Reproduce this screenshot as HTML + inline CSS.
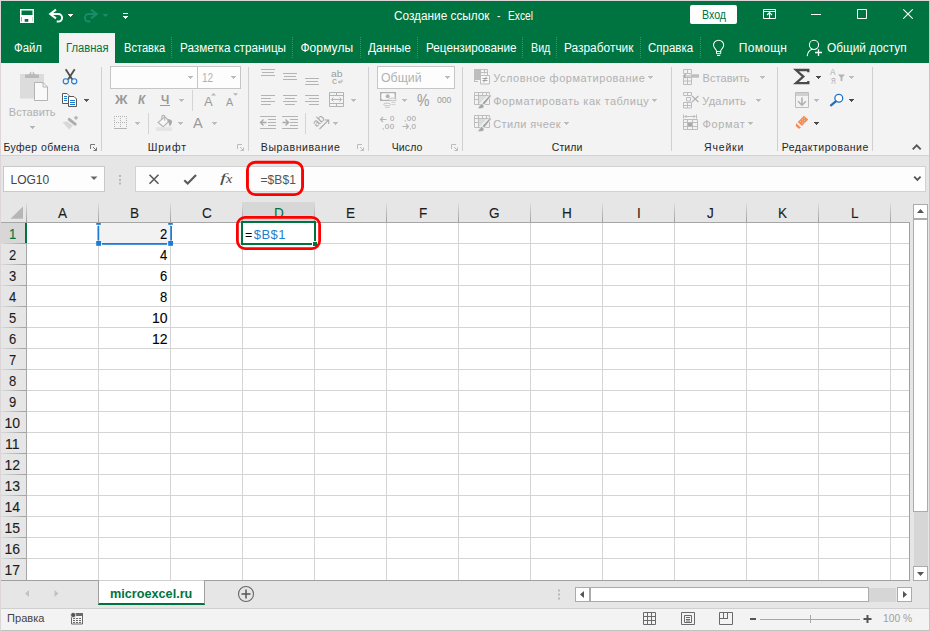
<!DOCTYPE html>
<html><head><meta charset="utf-8"><title>Excel</title>
<style>
html,body{margin:0;padding:0;}
body{width:930px;height:631px;overflow:hidden;position:relative;background:#e6e6e6;font-family:"Liberation Sans",sans-serif;}
.b{position:absolute;box-sizing:border-box;}
.t{position:absolute;white-space:pre;transform-origin:0 0;font-family:"Liberation Sans",sans-serif;}
svg{position:absolute;overflow:visible;}
</style></head><body>
<div class="b" style="left:0px;top:0px;width:930px;height:631px;background:#e6e6e6;"></div>
<div class="b" style="left:1px;top:1px;width:928px;height:62px;background:#007440;"></div>
<div class="b" style="left:59px;top:33px;width:56px;height:30px;background:#f3f3f3;"></div>
<div class="b" style="left:1px;top:63px;width:928px;height:92px;background:#f3f3f3;"></div>
<div class="b" style="left:1px;top:155px;width:928px;height:1px;background:#d2d2d2;"></div>
<div class="b" style="left:101px;top:67px;width:1px;height:84px;background:#d0d0d0;"></div>
<div class="b" style="left:248px;top:67px;width:1px;height:84px;background:#d0d0d0;"></div>
<div class="b" style="left:368px;top:67px;width:1px;height:84px;background:#d0d0d0;"></div>
<div class="b" style="left:462px;top:67px;width:1px;height:84px;background:#d0d0d0;"></div>
<div class="b" style="left:671px;top:67px;width:1px;height:84px;background:#d0d0d0;"></div>
<div class="b" style="left:777px;top:67px;width:1px;height:84px;background:#d0d0d0;"></div>
<div class="b" style="left:872px;top:67px;width:1px;height:84px;background:#d0d0d0;"></div>
<div class="b" style="left:3px;top:166px;width:102px;height:26px;background:#fdfdfd;border:1px solid #c9c9c9;"></div>
<div class="b" style="left:135px;top:166px;width:111px;height:26px;background:#fdfdfd;border:1px solid #d2d2d2;border-right:1px solid #e0e0e0;"></div>
<div class="b" style="left:245px;top:166px;width:681px;height:26px;background:#fdfdfd;border:1px solid #d2d2d2;border-left:none;"></div>
<div class="b" style="left:1px;top:201px;width:909px;height:21px;background:#e6e6e6;"></div>
<div class="b" style="left:1px;top:222px;width:909px;height:1px;background:#a6a6a6;"></div>
<div class="b" style="left:26px;top:223px;width:883px;height:357px;background:#fff;"></div>
<div class="b" style="left:242px;top:202px;width:73px;height:20px;background:#d7d7d7;"></div>
<div class="b" style="left:1px;top:223px;width:25px;height:20px;background:#d7d7d7;"></div>
<div class="b" style="left:99px;top:223px;width:71px;height:20px;background:#f2f2f2;"></div>
<div class="b" style="left:26px;top:203px;width:1px;height:19px;background:linear-gradient(to bottom,#dcdcdc,#a0a0a0);"></div>
<div class="b" style="left:98px;top:203px;width:1px;height:19px;background:linear-gradient(to bottom,#dcdcdc,#a0a0a0);"></div>
<div class="b" style="left:170px;top:203px;width:1px;height:19px;background:linear-gradient(to bottom,#dcdcdc,#a0a0a0);"></div>
<div class="b" style="left:242px;top:203px;width:1px;height:19px;background:linear-gradient(to bottom,#dcdcdc,#a0a0a0);"></div>
<div class="b" style="left:314px;top:203px;width:1px;height:19px;background:linear-gradient(to bottom,#dcdcdc,#a0a0a0);"></div>
<div class="b" style="left:386px;top:203px;width:1px;height:19px;background:linear-gradient(to bottom,#dcdcdc,#a0a0a0);"></div>
<div class="b" style="left:458px;top:203px;width:1px;height:19px;background:linear-gradient(to bottom,#dcdcdc,#a0a0a0);"></div>
<div class="b" style="left:530px;top:203px;width:1px;height:19px;background:linear-gradient(to bottom,#dcdcdc,#a0a0a0);"></div>
<div class="b" style="left:602px;top:203px;width:1px;height:19px;background:linear-gradient(to bottom,#dcdcdc,#a0a0a0);"></div>
<div class="b" style="left:674px;top:203px;width:1px;height:19px;background:linear-gradient(to bottom,#dcdcdc,#a0a0a0);"></div>
<div class="b" style="left:746px;top:203px;width:1px;height:19px;background:linear-gradient(to bottom,#dcdcdc,#a0a0a0);"></div>
<div class="b" style="left:818px;top:203px;width:1px;height:19px;background:linear-gradient(to bottom,#dcdcdc,#a0a0a0);"></div>
<div class="b" style="left:890px;top:203px;width:1px;height:19px;background:linear-gradient(to bottom,#dcdcdc,#a0a0a0);"></div>
<div class="b" style="left:98px;top:223px;width:1px;height:357px;background:#d4d4d4;"></div>
<div class="b" style="left:170px;top:223px;width:1px;height:357px;background:#d4d4d4;"></div>
<div class="b" style="left:242px;top:223px;width:1px;height:357px;background:#d4d4d4;"></div>
<div class="b" style="left:314px;top:223px;width:1px;height:357px;background:#d4d4d4;"></div>
<div class="b" style="left:386px;top:223px;width:1px;height:357px;background:#d4d4d4;"></div>
<div class="b" style="left:458px;top:223px;width:1px;height:357px;background:#d4d4d4;"></div>
<div class="b" style="left:530px;top:223px;width:1px;height:357px;background:#d4d4d4;"></div>
<div class="b" style="left:602px;top:223px;width:1px;height:357px;background:#d4d4d4;"></div>
<div class="b" style="left:674px;top:223px;width:1px;height:357px;background:#d4d4d4;"></div>
<div class="b" style="left:746px;top:223px;width:1px;height:357px;background:#d4d4d4;"></div>
<div class="b" style="left:818px;top:223px;width:1px;height:357px;background:#d4d4d4;"></div>
<div class="b" style="left:890px;top:223px;width:1px;height:357px;background:#d4d4d4;"></div>
<div class="b" style="left:26px;top:223px;width:1px;height:357px;background:#a6a6a6;"></div>
<div class="b" style="left:27px;top:243px;width:882px;height:1px;background:#d4d4d4;"></div>
<div class="b" style="left:1px;top:243px;width:25px;height:1px;background:linear-gradient(to right,#dadada,#a0a0a0);"></div>
<div class="b" style="left:27px;top:264px;width:882px;height:1px;background:#d4d4d4;"></div>
<div class="b" style="left:1px;top:264px;width:25px;height:1px;background:linear-gradient(to right,#dadada,#a0a0a0);"></div>
<div class="b" style="left:27px;top:285px;width:882px;height:1px;background:#d4d4d4;"></div>
<div class="b" style="left:1px;top:285px;width:25px;height:1px;background:linear-gradient(to right,#dadada,#a0a0a0);"></div>
<div class="b" style="left:27px;top:306px;width:882px;height:1px;background:#d4d4d4;"></div>
<div class="b" style="left:1px;top:306px;width:25px;height:1px;background:linear-gradient(to right,#dadada,#a0a0a0);"></div>
<div class="b" style="left:27px;top:327px;width:882px;height:1px;background:#d4d4d4;"></div>
<div class="b" style="left:1px;top:327px;width:25px;height:1px;background:linear-gradient(to right,#dadada,#a0a0a0);"></div>
<div class="b" style="left:27px;top:348px;width:882px;height:1px;background:#d4d4d4;"></div>
<div class="b" style="left:1px;top:348px;width:25px;height:1px;background:linear-gradient(to right,#dadada,#a0a0a0);"></div>
<div class="b" style="left:27px;top:369px;width:882px;height:1px;background:#d4d4d4;"></div>
<div class="b" style="left:1px;top:369px;width:25px;height:1px;background:linear-gradient(to right,#dadada,#a0a0a0);"></div>
<div class="b" style="left:27px;top:390px;width:882px;height:1px;background:#d4d4d4;"></div>
<div class="b" style="left:1px;top:390px;width:25px;height:1px;background:linear-gradient(to right,#dadada,#a0a0a0);"></div>
<div class="b" style="left:27px;top:411px;width:882px;height:1px;background:#d4d4d4;"></div>
<div class="b" style="left:1px;top:411px;width:25px;height:1px;background:linear-gradient(to right,#dadada,#a0a0a0);"></div>
<div class="b" style="left:27px;top:432px;width:882px;height:1px;background:#d4d4d4;"></div>
<div class="b" style="left:1px;top:432px;width:25px;height:1px;background:linear-gradient(to right,#dadada,#a0a0a0);"></div>
<div class="b" style="left:27px;top:453px;width:882px;height:1px;background:#d4d4d4;"></div>
<div class="b" style="left:1px;top:453px;width:25px;height:1px;background:linear-gradient(to right,#dadada,#a0a0a0);"></div>
<div class="b" style="left:27px;top:474px;width:882px;height:1px;background:#d4d4d4;"></div>
<div class="b" style="left:1px;top:474px;width:25px;height:1px;background:linear-gradient(to right,#dadada,#a0a0a0);"></div>
<div class="b" style="left:27px;top:495px;width:882px;height:1px;background:#d4d4d4;"></div>
<div class="b" style="left:1px;top:495px;width:25px;height:1px;background:linear-gradient(to right,#dadada,#a0a0a0);"></div>
<div class="b" style="left:27px;top:516px;width:882px;height:1px;background:#d4d4d4;"></div>
<div class="b" style="left:1px;top:516px;width:25px;height:1px;background:linear-gradient(to right,#dadada,#a0a0a0);"></div>
<div class="b" style="left:27px;top:537px;width:882px;height:1px;background:#d4d4d4;"></div>
<div class="b" style="left:1px;top:537px;width:25px;height:1px;background:linear-gradient(to right,#dadada,#a0a0a0);"></div>
<div class="b" style="left:27px;top:558px;width:882px;height:1px;background:#d4d4d4;"></div>
<div class="b" style="left:1px;top:558px;width:25px;height:1px;background:linear-gradient(to right,#dadada,#a0a0a0);"></div>
<div class="b" style="left:909px;top:222px;width:1px;height:359px;background:#a0a0a0;"></div>
<div class="b" style="left:1px;top:580px;width:909px;height:1px;background:#a0a0a0;"></div>
<div class="b" style="left:99px;top:580px;width:105px;height:1px;background:#d0d0d0;"></div>
<div class="b" style="left:25px;top:223px;width:2px;height:20px;background:#007440;"></div>
<div class="b" style="left:1px;top:608px;width:928px;height:1px;background:#cfcfcf;"></div>
<div class="b" style="left:1px;top:609px;width:928px;height:21px;background:#f3f3f3;"></div>
<div class="b" style="left:0px;top:630px;width:930px;height:1px;background:#c2c2c2;"></div>
<div class="b" style="left:929px;top:0px;width:1px;height:631px;background:#c6c6c6;"></div>
<div class="b" style="left:0px;top:0px;width:1px;height:631px;background:#dcd6d8;"></div>
<div class="b" style="left:0px;top:0px;width:930px;height:1px;background:#dcd6d8;"></div>
<div class="b" style="left:98px;top:581px;width:107px;height:24px;background:#fff;border-bottom:2px solid #007440;border-left:1px solid #a0a0a0;border-right:1px solid #a0a0a0;"></div>
<span class="t" style="left:394.40px;top:8.00px;font-size:12px;line-height:16px;color:#fff;transform:scaleX(0.9830);">Создание ссылок</span>
<span class="t" style="left:497.00px;top:8.00px;font-size:12px;line-height:16px;color:#fff;transform:scaleX(0.8500);">-</span>
<span class="t" style="left:507.60px;top:8.00px;font-size:12px;line-height:16px;color:#fff;transform:scaleX(0.8511);">Excel</span>
<div class="b" style="left:690px;top:5px;width:47px;height:19px;background:#fff;border-radius:2px;"></div>
<span class="t" style="left:702.00px;top:7.00px;font-size:12px;line-height:16px;color:#007440;transform:scaleX(0.8848);">Вход</span>
<span class="t" style="left:13.60px;top:40.00px;font-size:12px;line-height:16px;color:#fff;transform:scaleX(0.9492);">Файл</span>
<span class="t" style="left:66.00px;top:40.00px;font-size:12px;line-height:16px;color:#007440;transform:scaleX(0.9337);">Главная</span>
<span class="t" style="left:123.60px;top:40.00px;font-size:12px;line-height:16px;color:#fff;transform:scaleX(0.9232);">Вставка</span>
<span class="t" style="left:179.60px;top:40.00px;font-size:12px;line-height:16px;color:#fff;transform:scaleX(0.9736);">Разметка страницы</span>
<span class="t" style="left:300.40px;top:40.00px;font-size:12px;line-height:16px;color:#fff;letter-spacing:0.092px;">Формулы</span>
<span class="t" style="left:368.00px;top:40.00px;font-size:12px;line-height:16px;color:#fff;transform:scaleX(0.9914);">Данные</span>
<span class="t" style="left:425.60px;top:40.00px;font-size:12px;line-height:16px;color:#fff;transform:scaleX(0.9760);">Рецензирование</span>
<span class="t" style="left:531.00px;top:40.00px;font-size:12px;line-height:16px;color:#fff;transform:scaleX(0.8920);">Вид</span>
<span class="t" style="left:564.40px;top:40.00px;font-size:12px;line-height:16px;color:#fff;transform:scaleX(0.9925);">Разработчик</span>
<span class="t" style="left:648.40px;top:40.00px;font-size:12px;line-height:16px;color:#fff;transform:scaleX(0.9592);">Справка</span>
<span class="t" style="left:738.80px;top:40.00px;font-size:12px;line-height:16px;color:#fff;letter-spacing:0.290px;">Помощн</span>
<span class="t" style="left:826.90px;top:40.00px;font-size:12px;line-height:16px;color:#fff;transform:scaleX(0.9873);">Общий доступ</span>
<div class="b" style="left:171px;top:37px;width:1px;height:21px;background:repeating-linear-gradient(to bottom,#2f987c 0 1px,transparent 1px 2px);"></div>
<div class="b" style="left:292px;top:37px;width:1px;height:21px;background:repeating-linear-gradient(to bottom,#2f987c 0 1px,transparent 1px 2px);"></div>
<div class="b" style="left:360px;top:37px;width:1px;height:21px;background:repeating-linear-gradient(to bottom,#2f987c 0 1px,transparent 1px 2px);"></div>
<div class="b" style="left:417px;top:37px;width:1px;height:21px;background:repeating-linear-gradient(to bottom,#2f987c 0 1px,transparent 1px 2px);"></div>
<div class="b" style="left:522px;top:37px;width:1px;height:21px;background:repeating-linear-gradient(to bottom,#2f987c 0 1px,transparent 1px 2px);"></div>
<div class="b" style="left:556px;top:37px;width:1px;height:21px;background:repeating-linear-gradient(to bottom,#2f987c 0 1px,transparent 1px 2px);"></div>
<div class="b" style="left:640px;top:37px;width:1px;height:21px;background:repeating-linear-gradient(to bottom,#2f987c 0 1px,transparent 1px 2px);"></div>
<div class="b" style="left:700px;top:37px;width:1px;height:21px;background:repeating-linear-gradient(to bottom,#2f987c 0 1px,transparent 1px 2px);"></div>
<span class="t" style="left:3.40px;top:140.00px;font-size:10.5px;line-height:14px;color:#262626;letter-spacing:0.420px;">Буфер обмена</span>
<span class="t" style="left:147.80px;top:140.00px;font-size:10.5px;line-height:14px;color:#262626;letter-spacing:0.925px;">Шрифт</span>
<span class="t" style="left:260.80px;top:140.00px;font-size:10.5px;line-height:14px;color:#262626;letter-spacing:0.605px;">Выравнивание</span>
<span class="t" style="left:391.70px;top:140.00px;font-size:10.5px;line-height:14px;color:#262626;letter-spacing:0.138px;">Число</span>
<span class="t" style="left:551.70px;top:140.00px;font-size:10.5px;line-height:14px;color:#262626;letter-spacing:0.112px;">Стили</span>
<span class="t" style="left:704.00px;top:140.00px;font-size:10.5px;line-height:14px;color:#262626;letter-spacing:0.830px;">Ячейки</span>
<span class="t" style="left:781.70px;top:140.00px;font-size:10.5px;line-height:14px;color:#262626;letter-spacing:0.508px;">Редактирование</span>
<span class="t" style="left:8.80px;top:105.00px;font-size:11px;line-height:14px;color:#b1b1b1;letter-spacing:0.025px;">Вставить</span>
<span class="t" style="left:493.20px;top:71.00px;font-size:11px;line-height:14px;color:#b1b1b1;letter-spacing:0.533px;">Условное форматирование</span>
<span class="t" style="left:493.20px;top:94.00px;font-size:11px;line-height:14px;color:#b1b1b1;letter-spacing:0.520px;">Форматировать как таблицу</span>
<span class="t" style="left:493.20px;top:117.00px;font-size:11px;line-height:14px;color:#b1b1b1;letter-spacing:0.380px;">Стили ячеек</span>
<span class="t" style="left:702.60px;top:71.00px;font-size:11px;line-height:14px;color:#b1b1b1;letter-spacing:0.054px;">Вставить</span>
<span class="t" style="left:702.30px;top:94.00px;font-size:11px;line-height:14px;color:#b1b1b1;letter-spacing:0.250px;">Удалить</span>
<span class="t" style="left:702.60px;top:117.00px;font-size:11px;line-height:14px;color:#b1b1b1;letter-spacing:0.615px;">Формат</span>
<div class="b" style="left:110px;top:66px;width:88px;height:23px;background:#fdfdfd;border:1px solid #c6c6c6;"></div>
<div class="b" style="left:197px;top:66px;width:44px;height:23px;background:#fdfdfd;border:1px solid #c6c6c6;"></div>
<span class="t" style="left:202.00px;top:69.00px;font-size:13px;line-height:17px;color:#b1b1b1;transform:scaleX(0.7724);">12</span>
<div class="b" style="left:377px;top:66px;width:78px;height:23px;background:#fdfdfd;border:1px solid #c6c6c6;"></div>
<span class="t" style="left:380.60px;top:69.00px;font-size:13px;line-height:17px;color:#b1b1b1;transform:scaleX(0.9497);">Общий</span>
<span class="t" style="left:114.84px;top:92.00px;font-size:12px;line-height:16px;color:#9a9a9a;transform:scaleX(1.1506);font-weight:bold;">Ж</span>
<span class="t" style="left:138.00px;top:92.00px;font-size:12px;line-height:16px;color:#9a9a9a;transform:scaleX(0.9846);font-weight:bold;font-style:italic;">К</span>
<span class="t" style="left:160.80px;top:92.00px;font-size:12px;line-height:16px;color:#9a9a9a;transform:scaleX(0.9791);font-weight:bold;">Ч</span>
<div class="b" style="left:160px;top:105px;width:10px;height:1px;background:#9a9a9a;"></div>
<span class="t" style="left:203.70px;top:93.00px;font-size:13px;line-height:17px;color:#9a9a9a;transform:scaleX(1.0057);">A</span>
<span class="t" style="left:226.00px;top:96.00px;font-size:10px;line-height:13px;color:#9a9a9a;transform:scaleX(1.0815);">A</span>
<span class="t" style="left:193.30px;top:113.00px;font-size:15px;line-height:19px;color:#9a9a9a;transform:scaleX(0.9700);">A</span>
<span class="t" style="left:416.50px;top:91.00px;font-size:16px;line-height:19px;color:#9a9a9a;transform:scaleX(0.8772);">%</span>
<span class="t" style="left:437.00px;top:93.00px;font-size:9.5px;line-height:13px;color:#9a9a9a;transform:scaleX(0.9071);">000</span>
<span class="t" style="left:10.50px;top:172.00px;font-size:12px;line-height:16px;color:#444;">LOG10</span>
<span class="t" style="left:260.50px;top:172.00px;font-size:12px;line-height:16px;color:#555;letter-spacing:0.075px;">=$B$1</span>
<span class="t" style="left:58.15px;top:204.00px;font-size:14px;line-height:18px;color:#1c1c1c;transform:scaleX(0.9700);-webkit-text-stroke:0.1px currentColor;">A</span>
<span class="t" style="left:130.15px;top:204.00px;font-size:14px;line-height:18px;color:#1c1c1c;transform:scaleX(0.9700);-webkit-text-stroke:0.1px currentColor;">B</span>
<span class="t" style="left:201.79px;top:204.00px;font-size:14px;line-height:18px;color:#1c1c1c;transform:scaleX(0.9700);-webkit-text-stroke:0.1px currentColor;">C</span>
<span class="t" style="left:273.79px;top:204.00px;font-size:14px;line-height:18px;color:#007440;transform:scaleX(0.9700);-webkit-text-stroke:0.1px currentColor;">D</span>
<span class="t" style="left:346.15px;top:204.00px;font-size:14px;line-height:18px;color:#1c1c1c;transform:scaleX(0.9700);-webkit-text-stroke:0.1px currentColor;">E</span>
<span class="t" style="left:418.58px;top:204.00px;font-size:14px;line-height:18px;color:#1c1c1c;transform:scaleX(0.9700);-webkit-text-stroke:0.1px currentColor;">F</span>
<span class="t" style="left:489.43px;top:204.00px;font-size:14px;line-height:18px;color:#1c1c1c;transform:scaleX(0.9700);-webkit-text-stroke:0.1px currentColor;">G</span>
<span class="t" style="left:561.79px;top:204.00px;font-size:14px;line-height:18px;color:#1c1c1c;transform:scaleX(0.9700);-webkit-text-stroke:0.1px currentColor;">H</span>
<span class="t" style="left:636.82px;top:204.00px;font-size:14px;line-height:18px;color:#1c1c1c;transform:scaleX(0.9700);-webkit-text-stroke:0.1px currentColor;">I</span>
<span class="t" style="left:707.31px;top:204.00px;font-size:14px;line-height:18px;color:#1c1c1c;transform:scaleX(0.9700);-webkit-text-stroke:0.1px currentColor;">J</span>
<span class="t" style="left:778.15px;top:204.00px;font-size:14px;line-height:18px;color:#1c1c1c;transform:scaleX(0.9700);-webkit-text-stroke:0.1px currentColor;">K</span>
<span class="t" style="left:850.94px;top:204.00px;font-size:14px;line-height:18px;color:#1c1c1c;transform:scaleX(0.9700);-webkit-text-stroke:0.1px currentColor;">L</span>
<span class="t" style="left:8.70px;top:225.00px;font-size:14px;line-height:18px;color:#007440;transform:scaleX(0.9300);-webkit-text-stroke:0.1px currentColor;">1</span>
<span class="t" style="left:8.70px;top:246.00px;font-size:14px;line-height:18px;color:#1c1c1c;transform:scaleX(0.9300);-webkit-text-stroke:0.1px currentColor;">2</span>
<span class="t" style="left:8.70px;top:267.00px;font-size:14px;line-height:18px;color:#1c1c1c;transform:scaleX(0.9300);-webkit-text-stroke:0.1px currentColor;">3</span>
<span class="t" style="left:8.70px;top:288.00px;font-size:14px;line-height:18px;color:#1c1c1c;transform:scaleX(0.9300);-webkit-text-stroke:0.1px currentColor;">4</span>
<span class="t" style="left:8.70px;top:309.00px;font-size:14px;line-height:18px;color:#1c1c1c;transform:scaleX(0.9300);-webkit-text-stroke:0.1px currentColor;">5</span>
<span class="t" style="left:8.70px;top:330.00px;font-size:14px;line-height:18px;color:#1c1c1c;transform:scaleX(0.9300);-webkit-text-stroke:0.1px currentColor;">6</span>
<span class="t" style="left:8.70px;top:351.00px;font-size:14px;line-height:18px;color:#1c1c1c;transform:scaleX(0.9300);-webkit-text-stroke:0.1px currentColor;">7</span>
<span class="t" style="left:8.70px;top:372.00px;font-size:14px;line-height:18px;color:#1c1c1c;transform:scaleX(0.9300);-webkit-text-stroke:0.1px currentColor;">8</span>
<span class="t" style="left:8.70px;top:393.00px;font-size:14px;line-height:18px;color:#1c1c1c;transform:scaleX(0.9300);-webkit-text-stroke:0.1px currentColor;">9</span>
<span class="t" style="left:4.49px;top:414.00px;font-size:14px;line-height:18px;color:#1c1c1c;-webkit-text-stroke:0.1px currentColor;">10</span>
<span class="t" style="left:5.05px;top:435.00px;font-size:14px;line-height:18px;color:#1c1c1c;-webkit-text-stroke:0.1px currentColor;">11</span>
<span class="t" style="left:4.49px;top:456.00px;font-size:14px;line-height:18px;color:#1c1c1c;-webkit-text-stroke:0.1px currentColor;">12</span>
<span class="t" style="left:4.49px;top:477.00px;font-size:14px;line-height:18px;color:#1c1c1c;-webkit-text-stroke:0.1px currentColor;">13</span>
<span class="t" style="left:4.49px;top:498.00px;font-size:14px;line-height:18px;color:#1c1c1c;-webkit-text-stroke:0.1px currentColor;">14</span>
<span class="t" style="left:4.49px;top:519.00px;font-size:14px;line-height:18px;color:#1c1c1c;-webkit-text-stroke:0.1px currentColor;">15</span>
<span class="t" style="left:4.49px;top:540.00px;font-size:14px;line-height:18px;color:#1c1c1c;-webkit-text-stroke:0.1px currentColor;">16</span>
<span class="t" style="left:4.49px;top:561.00px;font-size:14px;line-height:18px;color:#1c1c1c;-webkit-text-stroke:0.1px currentColor;">17</span>
<span class="t" style="left:160.29px;top:225.00px;font-size:14px;line-height:18px;color:#000;transform:scaleX(0.9300);-webkit-text-stroke:0.1px currentColor;">2</span>
<span class="t" style="left:160.29px;top:246.00px;font-size:14px;line-height:18px;color:#000;transform:scaleX(0.9300);-webkit-text-stroke:0.1px currentColor;">4</span>
<span class="t" style="left:160.29px;top:267.00px;font-size:14px;line-height:18px;color:#000;transform:scaleX(0.9300);-webkit-text-stroke:0.1px currentColor;">6</span>
<span class="t" style="left:160.29px;top:288.00px;font-size:14px;line-height:18px;color:#000;transform:scaleX(0.9300);-webkit-text-stroke:0.1px currentColor;">8</span>
<span class="t" style="left:151.88px;top:309.00px;font-size:14px;line-height:18px;color:#000;-webkit-text-stroke:0.1px currentColor;">10</span>
<span class="t" style="left:151.88px;top:330.00px;font-size:14px;line-height:18px;color:#000;-webkit-text-stroke:0.1px currentColor;">12</span>
<span class="t" style="left:245.20px;top:226.00px;font-size:13px;line-height:17px;color:#000;transform:scaleX(0.9574);">=</span>
<span class="t" style="left:253.80px;top:226.00px;font-size:13px;line-height:17px;color:#1e80d2;letter-spacing:0.442px;">$B$1</span>
<span class="t" style="left:110.30px;top:585.00px;font-size:13px;line-height:17px;color:#007440;transform:scaleX(0.9740);font-weight:bold;">microexcel.ru</span>
<span class="t" style="left:6.70px;top:611.00px;font-size:11.5px;line-height:14px;color:#444;transform:scaleX(0.9641);">Правка</span>
<span class="t" style="left:882.60px;top:611.00px;font-size:11px;line-height:14px;color:#a0a0a0;transform:scaleX(0.9344);">100 %</span>
<span class="t" style="left:331.00px;top:68.00px;font-size:9px;line-height:12px;color:#9e9e9e;transform:scaleX(1.1500);">ab</span>
<span class="t" style="left:331.50px;top:75.00px;font-size:9px;line-height:12px;color:#9e9e9e;transform:scaleX(1.1111);">c</span>
<span class="t" style="left:390.00px;top:113.00px;font-size:8px;line-height:11px;color:#9e9e9e;transform:scaleX(0.9556);">0</span>
<span class="t" style="left:382.00px;top:121.00px;font-size:8px;line-height:11px;color:#9e9e9e;letter-spacing:0.588px;">,00</span>
<span class="t" style="left:404.00px;top:113.00px;font-size:8px;line-height:11px;color:#9e9e9e;letter-spacing:0.438px;">,00</span>
<span class="t" style="left:409.30px;top:121.00px;font-size:8px;line-height:11px;color:#9e9e9e;letter-spacing:0.075px;">,0</span>
<span class="t" style="left:830.20px;top:66.00px;font-size:9px;line-height:12px;color:#adadad;transform:scaleX(0.9167);">A</span>
<span class="t" style="left:830.80px;top:75.00px;font-size:9px;line-height:12px;color:#adadad;transform:scaleX(0.7077);">Я</span>
<span class="t" style="left:317.5px;top:118px;font-size:11px;line-height:11px;color:#a3a3a3;transform:rotate(-45deg);transform-origin:0 100%;">ab</span>
<span class="t" style="left:220.20px;top:169.00px;font-size:13px;line-height:17px;color:#4a4a4a;transform:scaleX(1.7171);font-style:italic;font-family:'Liberation Serif',serif;">f</span>
<span class="t" style="left:225.71px;top:172.00px;font-size:11.5px;line-height:14px;color:#4a4a4a;transform:scaleX(1.2279);font-style:italic;font-family:'Liberation Serif',serif;">x</span>
<svg width="930" height="631" viewBox="0 0 930 631" style="left:0;top:0"><path d="M20.75 9.75h12.5v12.5h-12.5z" stroke="#fff" stroke-width="1.5" fill="none" /><rect x="20" y="15" width="14" height="2" fill="#fff" /><rect x="22" y="17" width="10.5" height="6" fill="#fff" /><rect x="24.7" y="19" width="3.6" height="2.8" fill="#007440" /><path d="M56 9.600L50.200 14l5.800 4.400M50.600 14H58.300a3.800 3.800 0 0 1 0 7.600h-1.600" stroke="#fff" stroke-width="2" fill="none" /><path d="M68 14h5v1h-1v1h-1v1h-1v-1h-1v-1h-1z" fill="#fff"/><path d="M91 9.600L96.800 14l-5.800 4.400M96.400 14H88.700a3.800 3.800 0 0 0 0 7.600h1.600" stroke="#1a8c6a" stroke-width="2" fill="none" /><path d="M103 14h5v1h-1v1h-1v1h-1v-1h-1v-1h-1z" fill="#1a8c6a"/><rect x="123" y="13" width="5" height="1" fill="#fff" /><path d="M123 16h5v1h-1v1h-1v1h-1v-1h-1v-1h-1z" fill="#fff"/><path d="M763.500 9.500h12v9h-12zM763.500 11.500h12" stroke="#fff" stroke-width="1" fill="none" /><path d="M769.500 18.500v-5.500M767 15l2.500-2.500 2.500 2.500" stroke="#fff" stroke-width="1.1" fill="none" /><rect x="811" y="14" width="10" height="1" fill="#fff" /><path d="M857.5 9.5h9v9h-9z" stroke="#fff" stroke-width="1" fill="none" /><path d="M903.3 9.3l9.4 9.4M912.7 9.3l-9.4 9.4" stroke="#fff" stroke-width="1.1" fill="none" /><path d="M716.500 51.500v-.5c0-1.700-3-3-3-5.700a5.100 5.100 0 0 1 10.200 0c0 2.700-3 4-3 5.700v.5z" stroke="#fff" stroke-width="1.05" fill="none" /><path d="M716.500 51.500h4.200v2.200h-4.200z" stroke="#fff" stroke-width="1" fill="none" /><rect x="717" y="55" width="3.2" height="1" fill="#fff" /><circle cx="814" cy="44.800" r="4.600" fill="none" stroke="#fff" stroke-width="1.050"/><path d="M812.300 49.300c-3 .8-4.700 3.300-5.100 6.800" stroke="#fff" stroke-width="1.05" fill="none" /><path d="M818.500 49.300v6.800M815 52.500h7" stroke="#fff" stroke-width="1.3" fill="none" /><rect x="20" y="74" width="24" height="24.5" fill="#dcdcdc" /><path d="M25 78v-3.6h4.4a2.6 2.6 0 0 1 5.2 0H39V78z"  fill="#b9b9b9" /><rect x="31" y="72.4" width="2" height="1.6" fill="#f1f1f1" /><path d="M34.5 82.5h8.5l4.5 4.5v13.5h-13z" stroke="#b4b4b4" stroke-width="1" fill="#f9f9f9" /><path d="M43 82.5v4.5h4.5" stroke="#b4b4b4" stroke-width="1" fill="none" /><path d="M30 126h5v1h-1v1h-1v1h-1v-1h-1v-1h-1z" fill="#b5b5b5"/><path d="M65.700 69.300l6.600 10.200M74.700 69.300l-6.600 10.200" stroke="#4f4f4f" stroke-width="1.8" fill="none" /><circle cx="65.800" cy="81.300" r="2.600" stroke="#1e7bd4" stroke-width="1.100" fill="none"/><circle cx="74.200" cy="81.300" r="2.600" stroke="#1e7bd4" stroke-width="1.100" fill="none"/><path d="M62.5 93.5h4.5l2 2v8h-6.5z" stroke="#595959" stroke-width="1" fill="#fff" /><rect x="64" y="96" width="3" height="1" fill="#1e7bd4" /><rect x="64" y="98" width="3" height="1" fill="#1e7bd4" /><rect x="64" y="100" width="3" height="1" fill="#1e7bd4" /><path d="M68.5 96.5h5.5l2.5 2.5v7.5h-8z" stroke="#595959" stroke-width="1" fill="#fff" /><rect x="70" y="100" width="5" height="1" fill="#1e7bd4" /><rect x="70" y="102" width="5" height="1" fill="#1e7bd4" /><rect x="70" y="104" width="5" height="1" fill="#1e7bd4" /><path d="M84 99h5v1h-1v1h-1v1h-1v-1h-1v-1h-1z" fill="#595959"/><path d="M76 115.700l2.200 2.100-2.200 2.200-2.200-2.200z"  fill="#b4b4b4" /><path d="M69.200 119.400l6 4.700" stroke="#adadad" stroke-width="3" fill="none" stroke-linecap="round"/><path d="M67.300 121.300l5.600 4.400-3.800 3.900-6.600-7.300z"  fill="#d8d8d8" /><path d="M188 76h5v1h-1v1h-1v1h-1v-1h-1v-1h-1z" fill="#bcbcbc"/><path d="M231 76h5v1h-1v1h-1v1h-1v-1h-1v-1h-1z" fill="#bcbcbc"/><path d="M179 99h5v1h-1v1h-1v1h-1v-1h-1v-1h-1z" fill="#bcbcbc"/><rect x="192" y="90" width="1" height="21" fill="#d4d4d4" /><path d="M211 95.5l2.5-2.5 2.5 2.5z"  fill="#b4b4b4" /><path d="M233 93.3h5l-2.5 2.5z"  fill="#b4b4b4" /><line x1="114" y1="116.5" x2="127" y2="116.5" stroke="#b4b4b4" stroke-width="1" stroke-dasharray="1 1"/><line x1="114" y1="122.5" x2="127" y2="122.5" stroke="#b4b4b4" stroke-width="1" stroke-dasharray="1 1"/><line x1="114.5" y1="116" x2="114.5" y2="128" stroke="#b4b4b4" stroke-width="1" stroke-dasharray="1 1"/><line x1="120.5" y1="116" x2="120.5" y2="128" stroke="#b4b4b4" stroke-width="1" stroke-dasharray="1 1"/><line x1="126.5" y1="116" x2="126.5" y2="128" stroke="#b4b4b4" stroke-width="1" stroke-dasharray="1 1"/><rect x="114" y="128" width="13" height="1" fill="#b4b4b4" /><path d="M135 122h5v1h-1v1h-1v1h-1v-1h-1v-1h-1z" fill="#bcbcbc"/><rect x="148" y="113" width="1" height="21" fill="#d4d4d4" /><path d="M158.200 122.400l6.600-5.700 4.300 4.200-5.900 5.900z" stroke="#b4b4b4" stroke-width="1.2" fill="#f8f8f8" /><path d="M161.800 119.600v-2.700a1.500 1.500 0 0 1 3 0v3.800" stroke="#b4b4b4" stroke-width="1.1" fill="none" /><path d="M167.300 119l2.200 .3c1.600 .5 2.500 1.400 2.600 2.400-.2 1.800-1.200 3.300-2.600 4.800-.200-2.200-.6-4-2.100-5.500z"  fill="#a9a9a9" /><rect x="156" y="127.2" width="16" height="3.7" fill="#e4e4e4" /><path d="M178 122h5v1h-1v1h-1v1h-1v-1h-1v-1h-1z" fill="#bcbcbc"/><path d="M212 122h5v1h-1v1h-1v1h-1v-1h-1v-1h-1z" fill="#bcbcbc"/><rect x="261" y="69" width="14" height="1" fill="#b4b4b4" /><rect x="262" y="72" width="12" height="1" fill="#b4b4b4" /><rect x="261" y="75" width="14" height="1" fill="#b4b4b4" /><rect x="283" y="73" width="14" height="1" fill="#b4b4b4" /><rect x="284" y="76" width="12" height="1" fill="#b4b4b4" /><rect x="283" y="79" width="14" height="1" fill="#b4b4b4" /><rect x="305" y="78" width="14" height="1" fill="#b4b4b4" /><rect x="306" y="81" width="12" height="1" fill="#b4b4b4" /><rect x="305" y="84" width="14" height="1" fill="#b4b4b4" /><rect x="261" y="95" width="14" height="1" fill="#b4b4b4" /><rect x="283" y="95" width="14" height="1" fill="#b4b4b4" /><rect x="305" y="95" width="14" height="1" fill="#b4b4b4" /><rect x="261" y="98" width="10" height="1" fill="#b4b4b4" /><rect x="285" y="98" width="10" height="1" fill="#b4b4b4" /><rect x="309" y="98" width="10" height="1" fill="#b4b4b4" /><rect x="261" y="101" width="14" height="1" fill="#b4b4b4" /><rect x="283" y="101" width="14" height="1" fill="#b4b4b4" /><rect x="305" y="101" width="14" height="1" fill="#b4b4b4" /><rect x="261" y="104" width="10" height="1" fill="#b4b4b4" /><rect x="285" y="104" width="10" height="1" fill="#b4b4b4" /><rect x="309" y="104" width="10" height="1" fill="#b4b4b4" /><path d="M329.5 92.5h14v14h-14zM329.5 95.5h14M329.5 103.5h14M336.5 92.5v3M336.5 103.5v3" stroke="#b4b4b4" stroke-width="1" fill="none" /><path d="M331.5 99.500h10M333.500 97.500l-2 2 2 2M339.500 97.500l2 2-2 2" stroke="#b4b4b4" stroke-width="1" fill="none" /><path d="M351 99h5v1h-1v1h-1v1h-1v-1h-1v-1h-1z" fill="#bcbcbc"/><rect x="260" y="116" width="16" height="1" fill="#b4b4b4" /><rect x="260" y="128" width="16" height="1" fill="#b4b4b4" /><rect x="268" y="119" width="8" height="1" fill="#b4b4b4" /><rect x="268" y="122" width="8" height="1" fill="#b4b4b4" /><rect x="268" y="125" width="8" height="1" fill="#b4b4b4" /><path d="M260.500 122.500h6M263.500 119.500l-3 3 3 3" stroke="#a8a8a8" stroke-width="1.4" fill="none" /><rect x="282" y="116" width="16" height="1" fill="#b4b4b4" /><rect x="282" y="128" width="16" height="1" fill="#b4b4b4" /><rect x="290" y="119" width="8" height="1" fill="#b4b4b4" /><rect x="290" y="122" width="8" height="1" fill="#b4b4b4" /><rect x="290" y="125" width="8" height="1" fill="#b4b4b4" /><path d="M282.500 122.500h6M285.500 119.500l3 3-3 3" stroke="#a8a8a8" stroke-width="1.4" fill="none" /><rect x="305" y="113" width="1" height="21" fill="#d4d4d4" /><path d="M319.500 129l9-8.800M324.800 120h3.900v3.900" stroke="#a8a8a8" stroke-width="1.1" fill="none" /><path d="M333 122h5v1h-1v1h-1v1h-1v-1h-1v-1h-1z" fill="#bcbcbc"/><path d="M90.5 149v-4.500h4.500" stroke="#777" stroke-width="1" fill="none" /><path d="M93 147l3.500 3.500M96.5 147.5v3h-3" stroke="#777" stroke-width="1" fill="none" /><path d="M237.5 149v-4.500h4.500" stroke="#bcbcbc" stroke-width="1" fill="none" /><path d="M240 147l3.500 3.500M243.5 147.5v3h-3" stroke="#bcbcbc" stroke-width="1" fill="none" /><path d="M357.5 149v-4.500h4.500" stroke="#bcbcbc" stroke-width="1" fill="none" /><path d="M360 147l3.500 3.500M363.5 147.5v3h-3" stroke="#bcbcbc" stroke-width="1" fill="none" /><path d="M451.5 149v-4.500h4.500" stroke="#bcbcbc" stroke-width="1" fill="none" /><path d="M454 147l3.500 3.500M457.5 147.5v3h-3" stroke="#bcbcbc" stroke-width="1" fill="none" /><path d="M445 76h5v1h-1v1h-1v1h-1v-1h-1v-1h-1z" fill="#bcbcbc"/><path d="M380.700 92.700h14.600v7.600h-14.600z" stroke="#b2b2b2" stroke-width="1.3" fill="#f9f9f9" /><path d="M380.100 92.100h3l-3 3zM395.900 92.100h-3l3 3zM380.100 100.800h3l-3-3z"  fill="#b2b2b2" /><circle cx="387.700" cy="96.200" r="2" fill="#b2b2b2"/><ellipse cx="392.500" cy="99.400" rx="3.600" ry="1.400" fill="#f3f3f3" stroke="#c0c0c0" stroke-width=".9"/><rect x="391.5" y="102" width="4" height="0.8" fill="#cacaca" /><rect x="391.5" y="104.2" width="4" height="0.8" fill="#cacaca" /><ellipse cx="387.200" cy="104.500" rx="3.400" ry="1.400" fill="#f3f3f3" stroke="#c0c0c0" stroke-width=".9"/><rect x="385" y="107.1" width="5" height="0.8" fill="#cacaca" /><path d="M402 99h5v1h-1v1h-1v1h-1v-1h-1v-1h-1z" fill="#bcbcbc"/><path d="M380.500 119.500h6M383 117l-2.500 2.500 2.500 2.500" stroke="#b4b4b4" stroke-width="1.1" fill="none" /><path d="M402.500 126.500h6M406 124l2.500 2.500-2.500 2.500" stroke="#b4b4b4" stroke-width="1.1" fill="none" /><rect x="474" y="69" width="6" height="3" fill="#bdbdbd" /><rect x="474" y="73" width="6" height="3" fill="#bdbdbd" /><rect x="474" y="77" width="6" height="3" fill="#bdbdbd" /><rect x="474" y="81" width="4" height="1" fill="#bdbdbd" /><path d="M474.500 69.500h13v6M480.500 69.500v6M484.500 69.500v4M474.500 72.500h13M474.500 76.500h6M474.500 69.500v12" stroke="#bdbdbd" stroke-width="1" fill="none" /><path d="M480.500 75.500h9v8.500h-9z" stroke="#bdbdbd" stroke-width="1" fill="#f8f8f8" /><path d="M482.500 78.500h5M482.500 80.500h5M486.300 76.800l-2.600 5.600" stroke="#999" stroke-width="0.9" fill="none" /><path d="M474.500 92.5h15v12h-15zM474.500 95.5h15M478.500 92.5v12M482.500 92.5v3M486.500 92.5v3M474.500 99.5h4" stroke="#bdbdbd" stroke-width="1" fill="none" /><path d="M479 96h8l-8 8z"  fill="#dcdcdc" /><path d="M490.300 94.2l1 1.800-7 9-2.400-1.800z"  fill="#a6a6a6" stroke="#f3f3f3" stroke-width=".8"/><path d="M481.600 103.6l2.300 1.800c.5 1.700-.8 3-2.800 3.200-1.300 .2-2.600 0-3.600-.300 1.700-.9 1.500-2.900 4.100-4.700z"  fill="#a6a6a6" stroke="#f3f3f3" stroke-width=".6"/><path d="M474.500 115.5h15v12h-15zM474.500 118.5h15M478.500 115.5v12M482.500 115.5v3M486.500 115.5v3M474.500 122.5h4" stroke="#bdbdbd" stroke-width="1" fill="none" /><path d="M479 119h8l-8 8z"  fill="#dcdcdc" /><path d="M490.300 117.2l1 1.800-7 9-2.400-1.800z"  fill="#a6a6a6" stroke="#f3f3f3" stroke-width=".8"/><path d="M481.600 126.6l2.300 1.800c.5 1.700-.8 3-2.800 3.200-1.300 .2-2.600 0-3.600-.300 1.700-.9 1.500-2.900 4.100-4.700z"  fill="#a6a6a6" stroke="#f3f3f3" stroke-width=".6"/><path d="M648 76h5v1h-1v1h-1v1h-1v-1h-1v-1h-1z" fill="#bcbcbc"/><path d="M652 99h5v1h-1v1h-1v1h-1v-1h-1v-1h-1z" fill="#bcbcbc"/><path d="M564 122h5v1h-1v1h-1v1h-1v-1h-1v-1h-1z" fill="#bcbcbc"/><path d="M683.500 69.500h8v4h-8zM687.500 69.500v4M683.500 77.500h8v7h-8zM687.500 77.500v7M683.500 81h8" stroke="#bdbdbd" stroke-width="1" fill="none" /><rect x="690.5" y="74.3" width="8.5" height="3.4" fill="#bdbdbd" /><path d="M683.500 76h6.500M685.700 74l-2.200 2 2.200 2" stroke="#a9a9a9" stroke-width="1.1" fill="none" /><path d="M683.500 92.500h8v3h-8zM687.500 92.500v3M686.500 97.500h4v3.500h-4zM683.500 102.500h8v5.500h-8zM687.500 102.500v5.500M683.500 105.500h8" stroke="#bdbdbd" stroke-width="1" fill="none" /><path d="M692 96l6.500 6M698.500 96l-6.500 6" stroke="#b0b0b0" stroke-width="1.1" fill="none" /><path d="M683.500 114.500v4M696.500 114.500v4M684.500 116.500h11M686.500 115l-1.500 1.500 1.500 1.500M693.500 115l1.500 1.500-1.500 1.500" stroke="#bdbdbd" stroke-width="1" fill="none" /><path d="M683.500 119.500h14v10h-14zM683.500 122.500h14M683.500 126.500h14M687.500 119.500v10M692.500 119.500v10" stroke="#bdbdbd" stroke-width="1" fill="none" /><rect x="688" y="123" width="4" height="3" fill="#a9a9a9" /><path d="M760 76h5v1h-1v1h-1v1h-1v-1h-1v-1h-1z" fill="#bcbcbc"/><path d="M756 99h5v1h-1v1h-1v1h-1v-1h-1v-1h-1z" fill="#bcbcbc"/><path d="M748 122h5v1h-1v1h-1v1h-1v-1h-1v-1h-1z" fill="#bcbcbc"/><path d="M808.300 72.200v-2.200h-12.300l7.300 6.600-7.300 6.600h12.300v-2.200" stroke="#4a4a4a" stroke-width="2.3" fill="none" stroke-linejoin="miter"/><path d="M816 76h5v1h-1v1h-1v1h-1v-1h-1v-1h-1z" fill="#4a4a4a"/><path d="M838 74.500h7l-2.600 3v3.500h-1.800v-3.500z"  fill="#b4b4b4" /><path d="M849 76h5v1h-1v1h-1v1h-1v-1h-1v-1h-1z" fill="#bcbcbc"/><path d="M795.500 92.500h13v15h-13z" stroke="#bdbdbd" stroke-width="1" fill="none" /><rect x="796" y="93" width="12" height="3" fill="#d0d0d0" /><path d="M802 97.500v7.500M798 101.200l4 4 4-4" stroke="#b0b0b0" stroke-width="1.6" fill="none" /><path d="M814 99h5v1h-1v1h-1v1h-1v-1h-1v-1h-1z" fill="#bcbcbc"/><circle cx="838.800" cy="98.300" r="3.900" fill="#fff" stroke="#1e72c4" stroke-width="1.300"/><path d="M835.800 101.300l-4.800 4" stroke="#1e72c4" stroke-width="2.3" fill="none" stroke-linecap="round"/><path d="M849 99h5v1h-1v1h-1v1h-1v-1h-1v-1h-1z" fill="#4a4a4a"/><path d="M803.900 115.700l4.300 3.800-6.200 6.600-4.300-4.200z"  fill="#f58a55" /><path d="M796 123l5 4.700-2.100 1.100-3.100-2.500z"  fill="#f58a55" /><rect x="803.9" y="117.8" width="1" height="1" fill="#d9c4b4" /><rect x="801.9" y="119.1" width="1" height="1" fill="#d9c4b4" /><rect x="803.9" y="119.9" width="1" height="1" fill="#d9c4b4" /><rect x="799.9" y="121" width="1" height="1" fill="#d9c4b4" /><rect x="801.9" y="121.1" width="1" height="1" fill="#d9c4b4" /><rect x="803.9" y="122" width="1" height="1" fill="#d9c4b4" /><rect x="801.9" y="123.1" width="1" height="1" fill="#d9c4b4" /><path d="M814 122h5v1h-1v1h-1v1h-1v-1h-1v-1h-1z" fill="#4a4a4a"/><path d="M912.700 149.300l4-4 4 4" stroke="#555" stroke-width="1.9" fill="none" /><path d="M90.500 176.500h7l-3.500 3.500z"  fill="#666" /><rect x="119" y="175" width="2" height="2" fill="#b8b8b8" /><rect x="119" y="179" width="2" height="2" fill="#b8b8b8" /><rect x="119" y="182.5" width="2" height="2" fill="#b8b8b8" /><path d="M149.500 174.800l9 9M158.500 174.800l-9 9" stroke="#5a5a5a" stroke-width="1.6" fill="none" /><path d="M184.300 180.200l3.400 3.400 8.300-8.600" stroke="#5a5a5a" stroke-width="2.1" fill="none" /><path d="M342 79.500v2.500h-3.500M340 80.500l-1.500 1.500 1.500 1.500" stroke="#a8a8a8" stroke-width="0.9" fill="none" /><rect x="97.5" y="226" width="1.7" height="14.5" fill="#1a7cd6" /><rect x="170.3" y="226" width="1.7" height="14.5" fill="#1a7cd6" /><rect x="102" y="243" width="65" height="1.8" fill="#1a7cd6" /><rect x="96.2" y="223" width="4.6" height="1.8" fill="#1a7cd6" /><rect x="168.2" y="223" width="4.6" height="1.8" fill="#1a7cd6" /><rect x="96.2" y="241" width="4.8" height="4.8" fill="#1a7cd6" /><rect x="168.2" y="241" width="4.8" height="4.8" fill="#1a7cd6" /><rect x="242" y="222" width="73" height="22" fill="none" stroke="#007440" stroke-width="2"/><rect x="312.5" y="241.5" width="5" height="5" fill="#007440" stroke="#fff" stroke-width="1"/><rect x="243" y="221" width="71" height="2" fill="#007440" /><rect x="247.450" y="162.300" width="55.100" height="32.300" rx="7.800" fill="none" stroke="#fe0000" stroke-width="2.900"/><rect x="237.400" y="217.400" width="82.200" height="31.200" rx="7.600" fill="none" stroke="#fe0000" stroke-width="2.800"/><path d="M914.200 176.700l3.200 3.200 3.200-3.200" stroke="#555" stroke-width="1.8" fill="none" /><rect x="913.500" y="204.500" width="14" height="14" fill="#fff" stroke="#ababab"/><path d="M917 213l3.500-4 3.500 4z"  fill="#555" /><rect x="913.500" y="219.500" width="14" height="292" fill="#fff" stroke="#ababab"/><rect x="914" y="512" width="14" height="54" fill="#d6d6d6" /><rect x="913.500" y="566.500" width="14" height="14" fill="#fff" stroke="#ababab"/><path d="M917 572h7l-3.500 4z"  fill="#555" /><rect x="558" y="589.5" width="2" height="2" fill="#b8b8b8" /><rect x="558" y="593.5" width="2" height="2" fill="#b8b8b8" /><rect x="558" y="597.5" width="2" height="2" fill="#b8b8b8" /><rect x="575.500" y="587.500" width="14" height="14" fill="#fff" stroke="#ababab"/><path d="M584 591v7l-4-3.500z"  fill="#555" /><rect x="590.500" y="587.500" width="278" height="14" fill="#fff" stroke="#ababab"/><rect x="869" y="588" width="27" height="14" fill="#d6d6d6" /><rect x="897.500" y="587.500" width="14" height="14" fill="#fff" stroke="#ababab"/><path d="M903 591v7l4-3.500z"  fill="#555" /><path d="M29 590v7l-4-3.500z"  fill="#c2c2c2" /><path d="M54.500 590v7l4-3.500z"  fill="#c2c2c2" /><circle cx="246" cy="594" r="7.500" fill="none" stroke="#666" stroke-width="1.100"/><path d="M246 589.500v9M241.500 594h9" stroke="#555" stroke-width="1.5" fill="none" /><path d="M74.500 613.500h8v10.500h-11v-7" stroke="#6a6a6a" stroke-width="1" fill="none" /><rect x="75" y="613" width="8" height="3" fill="#6a6a6a" /><rect x="73" y="618" width="2" height="1" fill="#6a6a6a" /><rect x="76" y="618" width="2" height="1" fill="#6a6a6a" /><rect x="79" y="618" width="2" height="1" fill="#6a6a6a" /><rect x="73" y="620" width="2" height="1" fill="#6a6a6a" /><rect x="76" y="620" width="2" height="1" fill="#6a6a6a" /><rect x="79" y="620" width="2" height="1" fill="#6a6a6a" /><rect x="73" y="622" width="2" height="1" fill="#6a6a6a" /><rect x="76" y="622" width="2" height="1" fill="#6a6a6a" /><rect x="79" y="622" width="2" height="1" fill="#6a6a6a" /><circle cx="73.200" cy="615" r="2.600" fill="#555" stroke="#f3f3f3" stroke-width=".8"/><path d="M643.500 612.500h12v12h-12zM647.500 612.500v12M651.500 612.500v12M643.500 616.500h12M643.500 620.500h12" stroke="#6a6a6a" stroke-width="1" fill="none" /><path d="M681.500 612.500h13v12h-13zM684.500 615.500h7v7h-7zM686 617.500h4M686 619.500h4M686 621h4" stroke="#6a6a6a" stroke-width="1" fill="none" /><path d="M719.500 612.500h13v12h-13zM723.500 612.500v6M727.500 612.500v6M719.500 618.500h8.500" stroke="#6a6a6a" stroke-width="1" fill="none" /><rect x="750" y="618" width="6" height="2" fill="#555" /><rect x="760" y="619" width="100" height="1" fill="#a8a8a8" /><rect x="810" y="615" width="1" height="8" fill="#a8a8a8" /><path d="M867.500 615v8M863.500 619h8" stroke="#555" stroke-width="2" fill="none" /><path d="M23 206.500v12.300h-12.500z"  fill="#b6b6b6" /></svg>
</body></html>
